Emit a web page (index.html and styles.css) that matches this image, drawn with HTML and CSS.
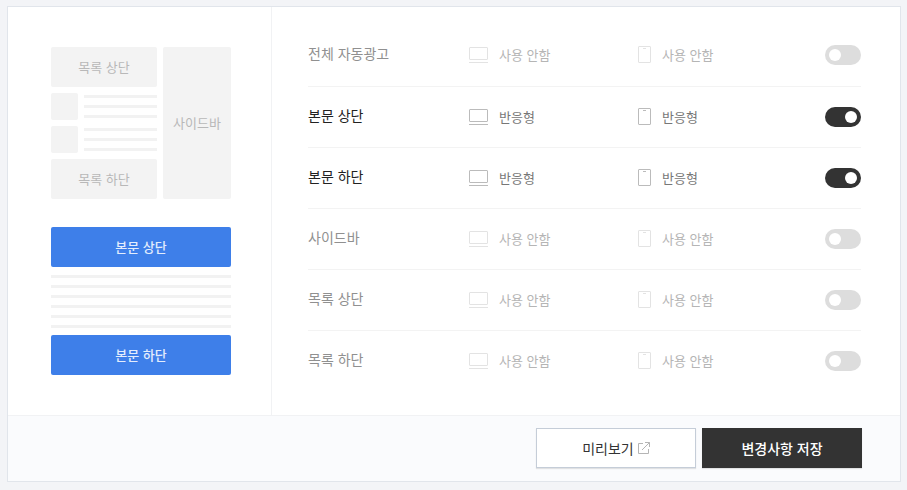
FILE: index.html
```html
<!DOCTYPE html>
<html lang="ko">
<head>
  <meta charset="UTF-8">
  <meta name="viewport" content="width=device-width, initial-scale=1">
  <title>광고 설정</title>
  <link rel="stylesheet" href="styles.css">
</head>
<body>
  <!-- Shared icons -->
  <svg class="sprite" aria-hidden="true">
    <symbol id="icon-desktop" viewBox="0 0 19 17">
      <rect x="0.5" y="1.5" width="18" height="12" rx="0.5" fill="none" stroke="currentColor"/>
      <path d="M0 16.5h19" stroke="currentColor"/>
    </symbol>
    <symbol id="icon-mobile" viewBox="0 0 13 17">
      <rect x="0.5" y="0.5" width="12" height="16" rx="0.5" fill="none" stroke="currentColor"/>
      <path d="M5 2.5h3" stroke="currentColor"/>
    </symbol>
  </svg>

  <form class="panel">
    <div class="panel-body">
      <!-- Layout preview -->
      <div class="preview">
        <div class="list-preview">
          <div class="list-main">
            <div class="slot">목록 상단</div>
            <div class="post">
              <div class="thumb"></div>
              <div class="lines"><i></i><i></i><i></i></div>
            </div>
            <div class="post">
              <div class="thumb"></div>
              <div class="lines"><i></i><i></i><i></i></div>
            </div>
            <div class="slot">목록 하단</div>
          </div>
          <div class="slot slot-side">사이드바</div>
        </div>
        <div class="article-preview">
          <div class="slot slot-on">본문 상단</div>
          <div class="lines"><i></i><i></i><i></i><i></i><i></i><i></i></div>
          <div class="slot slot-on">본문 하단</div>
        </div>
      </div>

      <!-- Ad positions -->
      <ul class="settings">
        <li class="row">
          <label class="name" for="ad-all">전체 자동광고</label>
          <span class="device"><svg class="desktop"><use href="#icon-desktop"/></svg>사용 안함</span>
          <span class="device"><svg class="mobile"><use href="#icon-mobile"/></svg>사용 안함</span>
          <input class="toggle" type="checkbox" id="ad-all">
        </li>
        <li class="row active">
          <label class="name" for="ad-top">본문 상단</label>
          <span class="device"><svg class="desktop"><use href="#icon-desktop"/></svg>반응형</span>
          <span class="device"><svg class="mobile"><use href="#icon-mobile"/></svg>반응형</span>
          <input class="toggle" type="checkbox" id="ad-top" checked>
        </li>
        <li class="row active">
          <label class="name" for="ad-bottom">본문 하단</label>
          <span class="device"><svg class="desktop"><use href="#icon-desktop"/></svg>반응형</span>
          <span class="device"><svg class="mobile"><use href="#icon-mobile"/></svg>반응형</span>
          <input class="toggle" type="checkbox" id="ad-bottom" checked>
        </li>
        <li class="row">
          <label class="name" for="ad-side">사이드바</label>
          <span class="device"><svg class="desktop"><use href="#icon-desktop"/></svg>사용 안함</span>
          <span class="device"><svg class="mobile"><use href="#icon-mobile"/></svg>사용 안함</span>
          <input class="toggle" type="checkbox" id="ad-side">
        </li>
        <li class="row">
          <label class="name" for="ad-list-top">목록 상단</label>
          <span class="device"><svg class="desktop"><use href="#icon-desktop"/></svg>사용 안함</span>
          <span class="device"><svg class="mobile"><use href="#icon-mobile"/></svg>사용 안함</span>
          <input class="toggle" type="checkbox" id="ad-list-top">
        </li>
        <li class="row">
          <label class="name" for="ad-list-bottom">목록 하단</label>
          <span class="device"><svg class="desktop"><use href="#icon-desktop"/></svg>사용 안함</span>
          <span class="device"><svg class="mobile"><use href="#icon-mobile"/></svg>사용 안함</span>
          <input class="toggle" type="checkbox" id="ad-list-bottom">
        </li>
      </ul>
    </div>

    <div class="panel-footer">
      <button class="btn" type="button">미리보기
        <svg class="external" viewBox="0 0 12 12" fill="none" stroke="currentColor" aria-hidden="true">
          <path d="M5 1.5H0.5v10h10V7M7 0.5h4.500v4.500M11.500 0.500L4 8"/>
        </svg>
      </button>
      <button class="btn btn-save" type="submit">변경사항 저장</button>
    </div>
  </form>
</body>
</html>
```

FILE: styles.css
```css
* {
  box-sizing: border-box;
}
body {
  margin: 0;
  padding: 6px 6px 8px 7px;
  background: #f3f4f7;
  font-family: "Noto Sans CJK KR", sans-serif;
  font-size: 13px;
  line-height: 20px;
  color: #333;
}
.sprite {
  display: none;
}
.panel {
  background: #fff;
  border: 1px solid #e1e5eb;
}
.panel-body {
  display: flex;
}

/* Layout preview */
.preview {
  flex: none;
  width: 264px;
  padding: 40px 40px 40px 43px;
  border-right: 1px solid #f1f2f4;
}
.list-preview {
  display: flex;
  gap: 6px;
  margin-bottom: 28px;
}
.list-main {
  flex: 1;
  display: flex;
  flex-direction: column;
  gap: 6px;
}
.slot {
  display: flex;
  align-items: center;
  justify-content: center;
  height: 40px;
  background: #f3f3f3;
  border-radius: 2px;
  color: #b8b8b8;
}
.slot-side {
  width: 68px;
  height: auto;
}
.slot-on {
  background: #3e7fe9;
  color: #e3edfd;
  font-weight: 500;
}
.post {
  display: flex;
  gap: 6px;
}
.thumb {
  width: 27px;
  height: 27px;
  background: #f3f3f3;
  border-radius: 2px;
}
.lines {
  flex: 1;
  display: flex;
  flex-direction: column;
  gap: 7px;
  padding-top: 2px;
}
.lines i {
  height: 3px;
  background: #f2f2f2;
}
.article-preview .lines {
  padding: 8px 0 7px;
}

/* Ad positions */
.settings {
  flex: 1;
  margin: 0;
  padding: 18px 39px 0 36px;
  list-style: none;
}
.row {
  display: grid;
  grid-template-columns: 161px 169px 1fr auto;
  align-items: center;
  padding: 20px 0;
  border-bottom: 1px solid #f3f3f3;
  color: #b5b5b5;
}
.row:first-child {
  padding-bottom: 21px;
}
.row:last-child {
  border-bottom: 0;
}
.name {
  padding-bottom: 4px;
  font-size: 14px;
  line-height: 16px;
  color: #909090;
}
.device {
  display: flex;
  align-items: center;
}
.device svg {
  height: 17px;
  margin: 0 11px 2px 0;
  color: #e3e3e3;
}
.desktop {
  width: 19px;
}
.mobile {
  width: 13px;
}
.active {
  color: #777;
}
.active .name {
  color: #222;
}
.active svg {
  color: #bbb;
}
.toggle {
  appearance: none;
  display: flex;
  align-items: center;
  width: 36px;
  height: 20px;
  margin: 0;
  padding: 0 4px;
  background: #ddd;
  border-radius: 10px;
  cursor: pointer;
}
.toggle::before {
  content: "";
  width: 12px;
  height: 12px;
  background: #fff;
  border-radius: 50%;
}
.toggle:checked {
  justify-content: flex-end;
  background: #333;
}

/* Footer buttons */
.panel-footer {
  display: flex;
  justify-content: flex-end;
  gap: 6px;
  padding: 12px 38px 13px;
  background: #fafbfd;
  border-top: 1px solid #f1f2f4;
}
.btn {
  display: flex;
  align-items: center;
  justify-content: center;
  gap: 4px;
  width: 160px;
  height: 40px;
  padding: 0;
  background: #fff;
  border: 1px solid #c5cdd8;
  box-shadow: 0 1px 1px rgba(0, 0, 0, 0.1);
  font: inherit;
  font-size: 14px;
  color: #333;
  cursor: pointer;
}
.btn-save {
  background: #333;
  border-color: #333;
  font-weight: 500;
  color: #fff;
}
.external {
  width: 12px;
  height: 12px;
  color: #b5b5b5;
}
```
